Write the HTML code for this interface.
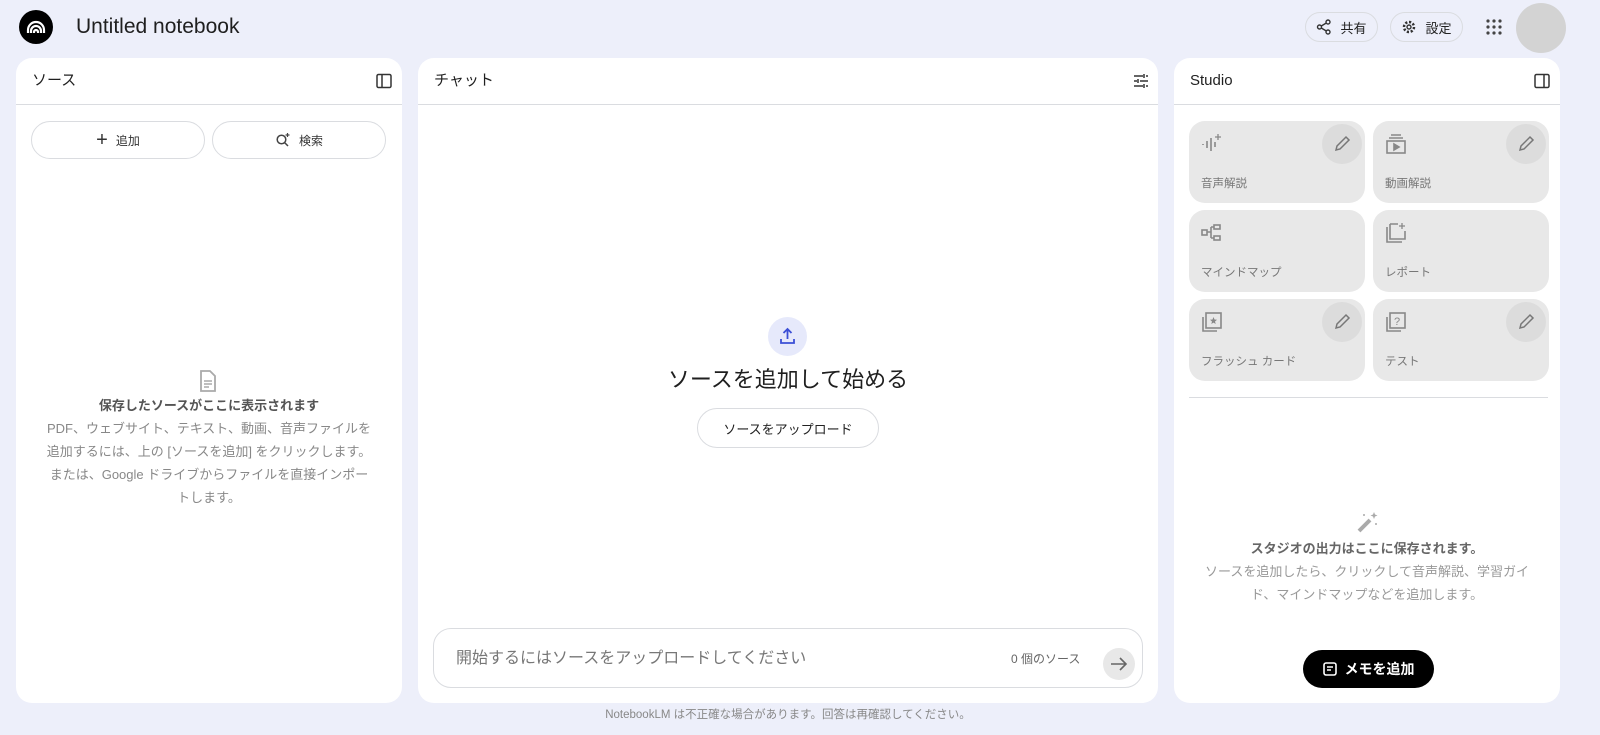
<!DOCTYPE html>
<html><head><meta charset="utf-8"><style>
*{box-sizing:border-box;margin:0;padding:0}
body{width:1600px;height:735px;background:#edeffa;font-family:"Liberation Sans","Noto Sans CJK JP",sans-serif;position:relative;overflow:hidden;color:#1f1f1f}
.a{position:absolute}
.panel{position:absolute;top:58px;height:645px;background:#fff;border-radius:16px}
.ph{position:absolute;left:0;right:0;top:0;height:47px;border-bottom:1px solid #dadce0}
.ph span{position:absolute;left:16px;top:13px;font-size:15px;line-height:20px}
.pill{position:absolute;border:1px solid #dadce0;border-radius:20px;background:#fff;font-size:12px;display:flex;align-items:center;justify-content:center;gap:8px;color:#333}
.card{position:absolute;width:176px;height:82px;background:#e8e8e8;border-radius:16px}
.card .t{position:absolute;left:12px;top:54px;font-size:11.5px;color:#777}
.card .ic{position:absolute;left:12px;top:12px}
.card .ed{position:absolute;right:3px;top:3px;width:40px;height:40px;border-radius:50%;background:#dcdcdc}
</style></head><body>
<div class="a" style="left:19px;top:10px;width:34px;height:34px;border-radius:50%;background:#000">
<svg width="34" height="34" viewBox="0 0 34 34"><path d="M9 23v-3a8 8 0 0 1 16 0v3M12 23v-2a5 5 0 0 1 10 0v2M15 23v-1a2 2 0 0 1 4 0v1" fill="none" stroke="#fff" stroke-width="2.2"/></svg></div>
<div class="a" style="left:76px;top:14px;font-size:21px;line-height:26px">Untitled notebook</div>

<div class="pill" style="left:1305px;top:12px;width:73px;height:30px;background:#edeffa;font-size:13px;color:#222">
<svg width="16" height="16" viewBox="0 0 16 16"><circle cx="12" cy="3" r="2" fill="none" stroke="#333" stroke-width="1.4"/><circle cx="3.5" cy="8" r="2" fill="none" stroke="#333" stroke-width="1.4"/><circle cx="12" cy="13" r="2" fill="none" stroke="#333" stroke-width="1.4"/><path d="M5.3 7l5-3M5.3 9l5 3" stroke="#333" stroke-width="1.4"/></svg>共有</div>
<div class="pill" style="left:1390px;top:12px;width:73px;height:30px;background:#edeffa;font-size:13px;color:#222">
<svg width="16" height="16" viewBox="0 0 16 16"><circle cx="8" cy="8" r="5" fill="none" stroke="#333" stroke-width="2.5" stroke-dasharray="2.2 1.7"/><circle cx="8" cy="8" r="2" fill="none" stroke="#333" stroke-width="1.4"/></svg>設定</div>
<svg class="a" style="left:1486px;top:19px" width="16" height="16" viewBox="0 0 16 16" fill="#444"><circle cx="2" cy="2" r="1.6"/><circle cx="8" cy="2" r="1.6"/><circle cx="14" cy="2" r="1.6"/><circle cx="2" cy="8" r="1.6"/><circle cx="8" cy="8" r="1.6"/><circle cx="14" cy="8" r="1.6"/><circle cx="2" cy="14" r="1.6"/><circle cx="8" cy="14" r="1.6"/><circle cx="14" cy="14" r="1.6"/></svg>
<div class="a" style="left:1516px;top:3px;width:50px;height:50px;border-radius:50%;background:#d3d3d3"></div>

<!-- sources -->
<div class="panel" style="left:16px;width:386px">
<div class="ph"><span>ソース</span>
<svg class="a" style="right:10px;top:15px" width="16" height="16" viewBox="0 0 16 16"><rect x="1" y="1.5" width="14" height="13" rx="1.5" fill="none" stroke="#333" stroke-width="1.5"/><path d="M6 1.5v13" stroke="#333" stroke-width="1.5"/></svg></div>
<div class="pill" style="left:15px;top:63px;width:174px;height:38px"><span style="font-size:20px;font-weight:300">+</span>追加</div>
<div class="pill" style="left:196px;top:63px;width:174px;height:38px"><svg width="16" height="16" viewBox="0 0 16 16"><circle cx="6.5" cy="7.5" r="4.3" fill="none" stroke="#444" stroke-width="1.5"/><path d="M9.5 10.5l3.5 3.5" stroke="#444" stroke-width="1.5"/><path d="M12.5 1v4M10.5 3h4" stroke="#444" stroke-width="1.2"/></svg>検索</div>
<svg class="a" style="left:183px;top:312px" width="18" height="22" viewBox="0 0 18 22"><path d="M2 1h9l5 5v15H2z" fill="none" stroke="#aaa" stroke-width="1.8"/><path d="M5 11h8M5 14h8M5 17h5" stroke="#aaa" stroke-width="1.5"/></svg>
<div class="a" style="left:0;right:0;top:336px;text-align:center;font-size:13px;line-height:23px;color:#888">
<div style="color:#555;font-weight:bold">保存したソースがここに表示されます</div>
PDF、ウェブサイト、テキスト、動画、音声ファイルを<br>追加するには、上の [ソースを追加] をクリックします。<br>または、Google ドライブからファイルを直接インポー<br>トします。</div>
</div>

<!-- chat -->
<div class="panel" style="left:418px;width:740px">
<div class="ph"><span>チャット</span>
<svg class="a" style="right:9px;top:15px" width="16" height="16" viewBox="0 0 16 16" stroke="#333" stroke-width="1.5"><path d="M1 3h9M13 3h2M11 1v4M1 8h3M7 8h8M5 6v4M1 13h9M13 13h2M11 11v4"/></svg></div>
<div class="a" style="left:350px;top:259px;width:39px;height:39px;border-radius:50%;background:#e6e9fb">
<svg width="39" height="39" viewBox="0 0 39 39"><path d="M19.5 12v10M15.5 16l4-4 4 4M13 22v4h13v-4" fill="none" stroke="#3b4fd6" stroke-width="1.8"/></svg></div>
<div class="a" style="left:0;right:0;top:307px;text-align:center;font-size:22px;line-height:30px">ソースを追加して始める</div>
<div class="pill" style="left:279px;top:350px;width:182px;height:40px;font-size:13px;color:#222">ソースをアップロード</div>
<div class="a" style="left:15px;top:570px;width:710px;height:60px;border:1px solid #dadce0;border-radius:18px">
<div class="a" style="left:22px;top:20px;font-size:16px;line-height:20px;color:#777">開始するにはソースをアップロードしてください</div>
<div class="a" style="left:577px;top:21px;font-size:12px;color:#666">0 個のソース</div>
<div class="a" style="left:669px;top:19px;width:32px;height:32px;border-radius:50%;background:#e8e8e8">
<svg width="32" height="32" viewBox="0 0 32 32"><path d="M8 16h15M17 10l6 6-6 6" fill="none" stroke="#666" stroke-width="1.6"/></svg></div>
</div>
</div>
<div class="a" style="left:418px;width:740px;top:706px;text-align:center;font-size:11.5px;color:#888">NotebookLM は不正確な場合があります。回答は再確認してください。</div>

<!-- studio -->
<div class="panel" style="left:1174px;width:386px">
<div class="ph"><span>Studio</span>
<svg class="a" style="right:10px;top:15px" width="16" height="16" viewBox="0 0 16 16"><rect x="1" y="1.5" width="14" height="13" rx="1.5" fill="none" stroke="#333" stroke-width="1.5"/><path d="M10 1.5v13" stroke="#333" stroke-width="1.5"/></svg></div>
<div class="card" style="left:15px;top:63px"><svg class="ic" width="22" height="22" viewBox="0 0 22 22" stroke="#888" stroke-width="1.6"><path d="M2 11v1M6 8v7M10 5v13M14 9v5"/><path d="M17 1v6M14 4h6" stroke-width="1.3"/></svg><div class="ed"><svg width="40" height="40" viewBox="0 0 40 40"><path d="M14 26l1-4 9-9 3 3-9 9z" fill="none" stroke="#777" stroke-width="1.5"/></svg></div><div class="t">音声解説</div></div>
<div class="card" style="left:199px;top:63px"><svg class="ic" width="22" height="22" viewBox="0 0 22 22" stroke="#888" stroke-width="1.6" fill="none"><path d="M6 2h10M4 5h14"/><rect x="2" y="8" width="18" height="12"/><path d="M9 11v6l5-3z" fill="#888"/></svg><div class="ed"><svg width="40" height="40" viewBox="0 0 40 40"><path d="M14 26l1-4 9-9 3 3-9 9z" fill="none" stroke="#777" stroke-width="1.5"/></svg></div><div class="t">動画解説</div></div>
<div class="card" style="left:15px;top:152px"><svg class="ic" width="22" height="22" viewBox="0 0 22 22" stroke="#888" stroke-width="1.6" fill="none"><rect x="1" y="8" width="5" height="5"/><rect x="13" y="3" width="6" height="4"/><rect x="13" y="14" width="6" height="4"/><path d="M6 10h4M10 5v11M10 5h3M10 16h3"/></svg><div class="t">マインドマップ</div></div>
<div class="card" style="left:199px;top:152px"><svg class="ic" width="22" height="22" viewBox="0 0 22 22" stroke="#888" stroke-width="1.6" fill="none"><path d="M2 5v15h15"/><path d="M5 2v15h15V9M5 2h8"/><path d="M17 1v6M14 4h6" stroke-width="1.3"/></svg><div class="t">レポート</div></div>
<div class="card" style="left:15px;top:241px"><svg class="ic" width="22" height="22" viewBox="0 0 22 22" stroke="#888" stroke-width="1.6" fill="none"><path d="M2 6v14h14"/><rect x="5" y="2" width="15" height="15"/><path d="M12.5 6l1 2.5 2.5.3-2 1.7.7 2.5-2.2-1.4-2.2 1.4.7-2.5-2-1.7 2.5-.3z" fill="#888" stroke="none"/></svg><div class="ed"><svg width="40" height="40" viewBox="0 0 40 40"><path d="M14 26l1-4 9-9 3 3-9 9z" fill="none" stroke="#777" stroke-width="1.5"/></svg></div><div class="t">フラッシュ カード</div></div>
<div class="card" style="left:199px;top:241px"><svg class="ic" width="22" height="22" viewBox="0 0 22 22" stroke="#888" stroke-width="1.6" fill="none"><path d="M2 6v14h14"/><rect x="5" y="2" width="15" height="15"/><text x="9" y="14" font-size="11" fill="#888" stroke="none" font-family="Liberation Sans">?</text></svg><div class="ed"><svg width="40" height="40" viewBox="0 0 40 40"><path d="M14 26l1-4 9-9 3 3-9 9z" fill="none" stroke="#777" stroke-width="1.5"/></svg></div><div class="t">テスト</div></div>
<div class="a" style="left:15px;right:12px;top:339px;border-top:1px solid #dadce0"></div>
<svg class="a" style="left:182px;top:452px" width="24" height="24" viewBox="0 0 24 24"><path d="M3 21l11-11" stroke="#aaa" stroke-width="4"/><path d="M18 2l1 2.5 2.5 1-2.5 1-1 2.5-1-2.5-2.5-1 2.5-1z" fill="#aaa"/><circle cx="8" cy="5" r="1" fill="#aaa"/><circle cx="20" cy="14" r="1" fill="#aaa"/></svg>
<div class="a" style="left:0;right:0;top:479px;text-align:center;font-size:13px;line-height:23px;color:#999">
<div style="color:#666;font-weight:bold">スタジオの出力はここに保存されます。</div>
ソースを追加したら、クリックして音声解説、学習ガイ<br>ド、マインドマップなどを追加します。</div>
<div class="a" style="left:129px;top:592px;width:131px;height:38px;border-radius:19px;background:#000;color:#fff;font-size:14px;font-weight:bold;display:flex;align-items:center;justify-content:center;gap:8px">
<svg width="14" height="14" viewBox="0 0 14 14"><rect x="1" y="1" width="12" height="12" rx="2" fill="none" stroke="#fff" stroke-width="1.6"/><path d="M4 5h6M4 8h4" stroke="#fff" stroke-width="1.5"/></svg>メモを追加</div>
</div>
</body></html>
